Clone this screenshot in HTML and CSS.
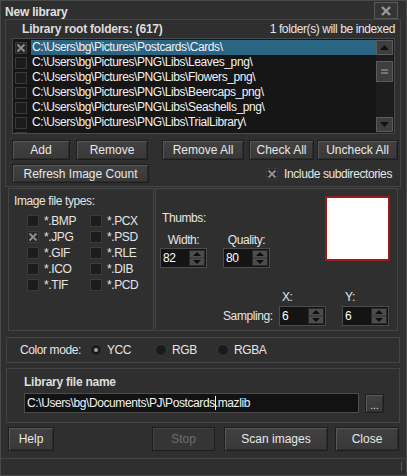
FILE: index.html
```html
<!DOCTYPE html>
<html lang="en">
<head>
    <meta charset="UTF-8">
    <title>New library</title>
    <link rel="stylesheet" href="styles.css">
</head>
<body>
<div class="window">
    <div class="titlebar">
        <span class="title">New library</span>
        <button class="close" type="button">
            <svg width="12" height="10" viewBox="0 0 12 10"><path d="M2 1L10 9M10 1L2 9" stroke="#9a9a9a" stroke-width="2.4"/></svg>
        </button>
    </div>

    <div class="roots">
        <div class="roots-head">
            <b>Library root folders: (617)</b>
            <span>1 folder(s) will be indexed</span>
        </div>
        <div class="folder-list">
            <div class="rows">
                <div class="row selected"><span class="check on"><svg viewBox="0 0 10 10"><path d="M1.5 1.5L8.5 8.5M8.5 1.5L1.5 8.5" stroke="#8c8c8c" stroke-width="2"/></svg></span><span class="path">C:\Users\bg\Pictures\Postcards\Cards\</span></div>
                <div class="row"><span class="check"></span><span class="path">C:\Users\bg\Pictures\PNG\Libs\Leaves_png\</span></div>
                <div class="row"><span class="check"></span><span class="path">C:\Users\bg\Pictures\PNG\Libs\Flowers_png\</span></div>
                <div class="row"><span class="check"></span><span class="path">C:\Users\bg\Pictures\PNG\Libs\Beercaps_png\</span></div>
                <div class="row"><span class="check"></span><span class="path">C:\Users\bg\Pictures\PNG\Libs\Seashells_png\</span></div>
                <div class="row"><span class="check"></span><span class="path">C:\Users\bg\Pictures\PNG\Libs\TrialLibrary\</span></div>
                <div class="row"><span class="check"></span><span class="path"></span></div>
            </div>
            <div class="scrollbar">
                <span class="sb-btn"><svg width="9" height="5" viewBox="0 0 9 5"><path d="M0 5L4.5 0L9 5Z" fill="#111"/></svg></span>
                <span class="sb-thumb"><svg width="7" height="5" viewBox="0 0 7 5"><path d="M0 1H7M0 4H7" stroke="#aaa" stroke-width="1"/></svg></span>
                <span class="sb-btn down"><svg width="9" height="5" viewBox="0 0 9 5"><path d="M0 0L4.5 5L9 0Z" fill="#111"/></svg></span>
            </div>
        </div>
        <div class="btn-row main">
            <button class="btn add" type="button">Add</button>
            <button class="btn remove" type="button">Remove</button>
            <button class="btn remove-all" type="button">Remove All</button>
            <button class="btn check-all" type="button">Check All</button>
            <button class="btn uncheck-all" type="button">Uncheck All</button>
        </div>
        <div class="btn-row extra">
            <button class="btn refresh" type="button">Refresh Image Count</button>
            <label class="include"><span class="check on"><svg viewBox="0 0 10 10"><path d="M1.5 1.5L8.5 8.5M8.5 1.5L1.5 8.5" stroke="#8c8c8c" stroke-width="2"/></svg></span>Include subdirectories</label>
        </div>
    </div>

    <div class="middle">
        <div class="filetypes">
            <div class="group-title">Image file types:</div>
            <div class="type-grid">
                <label class="type"><span class="check"></span>*.BMP</label>
                <label class="type"><span class="check on"><svg viewBox="0 0 10 10"><path d="M1.5 1.5L8.5 8.5M8.5 1.5L1.5 8.5" stroke="#8c8c8c" stroke-width="2"/></svg></span>*.JPG</label>
                <label class="type"><span class="check"></span>*.GIF</label>
                <label class="type"><span class="check"></span>*.ICO</label>
                <label class="type"><span class="check"></span>*.TIF</label>
                <label class="type"><span class="check"></span>*.PCX</label>
                <label class="type"><span class="check"></span>*.PSD</label>
                <label class="type"><span class="check"></span>*.RLE</label>
                <label class="type"><span class="check"></span>*.DIB</label>
                <label class="type"><span class="check"></span>*.PCD</label>
            </div>
        </div>

        <div class="thumbs">
            <div class="thumbs-top">
                <div class="thumbs-left">
                    <div class="thumbs-label">Thumbs:</div>
                    <div class="spins">
                        <div class="spin-group">
                            <span class="spin-caption">Width:</span>
                            <div class="spin"><span class="spin-value">82</span><span class="spin-arrows"><svg width="14" height="16" viewBox="0 0 14 16"><path d="M3 6L7 2L11 6Z M3 10L7 14L11 10Z" fill="#0d0d0d"/><path d="M0 8H14" stroke="#333" stroke-width="1"/></svg></span></div>
                        </div>
                        <div class="spin-group">
                            <span class="spin-caption">Quality:</span>
                            <div class="spin"><span class="spin-value">80</span><span class="spin-arrows"><svg width="14" height="16" viewBox="0 0 14 16"><path d="M3 6L7 2L11 6Z M3 10L7 14L11 10Z" fill="#0d0d0d"/><path d="M0 8H14" stroke="#333" stroke-width="1"/></svg></span></div>
                        </div>
                    </div>
                </div>
                <div class="preview"></div>
            </div>
            <div class="sampling">
                <span class="sampling-label">Sampling:</span>
                <div class="sample-group">
                    <span class="sample-caption">X:</span>
                    <div class="spin"><span class="spin-value">6</span><span class="spin-arrows"><svg width="14" height="16" viewBox="0 0 14 16"><path d="M3 6L7 2L11 6Z M3 10L7 14L11 10Z" fill="#0d0d0d"/><path d="M0 8H14" stroke="#333" stroke-width="1"/></svg></span></div>
                </div>
                <div class="sample-group">
                    <span class="sample-caption">Y:</span>
                    <div class="spin"><span class="spin-value">6</span><span class="spin-arrows"><svg width="14" height="16" viewBox="0 0 14 16"><path d="M3 6L7 2L11 6Z M3 10L7 14L11 10Z" fill="#0d0d0d"/><path d="M0 8H14" stroke="#333" stroke-width="1"/></svg></span></div>
                </div>
            </div>
        </div>
    </div>

    <div class="colormode">
        <span class="mode-label">Color mode:</span>
        <label class="radio-opt"><span class="radio on"></span>YCC</label>
        <label class="radio-opt rgb"><span class="radio"></span>RGB</label>
        <label class="radio-opt"><span class="radio"></span>RGBA</label>
    </div>

    <div class="libfile">
        <div class="libfile-title">Library file name</div>
        <div class="libfile-row">
            <div class="path-input">C:\Users\bg\Documents\PJ\Postcards<span class="caret"></span>.mazlib</div>
            <button class="btn browse" type="button">...</button>
        </div>
    </div>

    <div class="actions">
        <button class="btn help" type="button">Help</button>
        <button class="btn stop" type="button" disabled>Stop</button>
        <button class="btn scan" type="button">Scan images</button>
        <button class="btn close-btn" type="button">Close</button>
    </div>

    <div class="statusbar"><span class="grip"></span></div>
</div>
</body>
</html>
```

FILE: styles.css
```css
* {
    box-sizing: border-box;
}
body {
    margin: 0;
    background: #2f2f2f;
    font-family: "Liberation Sans", Arial, sans-serif;
    font-size: 12px;
    letter-spacing: -0.4px;
    color: #e6e6e6;
}
.window {
    width: 407px;
    height: 476px;
    border: 1px solid #4a4a4a;
    background: #2f2f2f;
    display: flex;
    flex-direction: column;
    overflow: hidden;
}

/* title bar */
.titlebar {
    height: 18px;
    display: flex;
    align-items: center;
    padding: 0 8px 0 4px;
}
.title {
    font-weight: bold;
    letter-spacing: -0.2px;
    margin-top: 3px;
    color: #e2e2e2;
}
.close {
    margin-left: auto;
    margin-top: 1px;
    width: 24px;
    height: 17px;
    padding: 0;
    border: 1px solid #585858;
    background: #353535;
    display: flex;
    align-items: center;
    justify-content: center;
}

/* library root folders */
.roots {
    margin: 0 5px 0 4px;
    height: 168px;
    border: 1px solid #444;
}
.roots-head {
    height: 18px;
    display: flex;
    align-items: center;
    justify-content: space-between;
    padding: 0 5px 0 16px;
}
.roots-head b {
    letter-spacing: -0.2px;
    color: #dedede;
}
.folder-list {
    margin: 0 5px 0 6px;
    height: 96px;
    border: 1px solid #4a4a4a;
    background: #161616;
    display: flex;
}
.rows {
    flex: 1;
    padding-top: 1px;
    overflow: hidden;
}
.row {
    height: 15px;
    display: flex;
    align-items: center;
    padding-left: 2px;
}
.row .check {
    margin-right: 4px;
}
.path {
    flex: 1;
    height: 15px;
    line-height: 15px;
    padding-left: 1px;
    white-space: nowrap;
    color: #f2f2f2;
}
.row.selected .path {
    background: #2a6584;
}
.scrollbar {
    width: 17px;
    margin-right: 1px;
    padding: 1px 0;
    display: flex;
    flex-direction: column;
    background: #1d1d1d;
}
.sb-btn, .sb-thumb {
    border: 1px solid #5c5c5c;
    background: #3e3e3e;
    display: flex;
    align-items: center;
    justify-content: center;
}
.sb-btn {
    height: 15px;
}
.sb-thumb {
    margin-top: 6px;
    height: 21px;
}
.sb-btn.down {
    margin-top: auto;
}

/* checkboxes */
.check {
    width: 12px;
    height: 12px;
    flex: none;
    border: 1px solid #3a3a3a;
    background: #1c1c1c;
    display: inline-flex;
}
.check svg {
    width: 10px;
    height: 10px;
}
.check.on {
    background: #262626;
}

/* buttons */
.btn {
    height: 100%;
    padding: 0;
    font: inherit;
    color: #e8e8e8;
    border: 1px solid #1e1e1e;
    background: linear-gradient(#414141, #383838);
    box-shadow: inset 1px 1px 0 #585858, inset -1px -1px 0 #2c2c2c;
}
.btn:disabled {
    color: #6e6e6e;
    box-shadow: inset 1px 1px 0 #434343;
    background: #353535;
}
.btn-row {
    display: flex;
    align-items: center;
    padding-left: 6px;
}
.btn-row.main {
    margin-top: 6px;
    height: 20px;
}
.btn-row.extra {
    margin-top: 4px;
    height: 19px;
}
.add { width: 58px; }
.remove { width: 72px; margin-left: 6px; }
.remove-all { width: 82px; margin-left: 14px; }
.check-all { width: 65px; margin-left: 5px; }
.uncheck-all { width: 81px; margin-left: 3px; }
.refresh { width: 137px; }
.include {
    margin-left: auto;
    padding-right: 8px;
    display: flex;
    align-items: center;
    gap: 6px;
}

/* file types + thumbs */
.middle {
    display: flex;
    margin: 1px 0 0 7px;
    height: 143px;
}
.filetypes {
    width: 146px;
    border: 1px solid #444;
    padding: 5px 0 0 5px;
}
.group-title {
    line-height: 14px;
}
.type-grid {
    margin: 5px 0 0 13px;
    display: grid;
    grid-template-columns: 63px auto;
    grid-template-rows: repeat(5, 16px);
    grid-auto-flow: column;
}
.type {
    display: flex;
    align-items: center;
    gap: 5px;
}
.thumbs {
    width: 243px;
    margin-left: 1px;
    border: 1px solid #444;
}
.thumbs-top {
    display: flex;
    align-items: flex-start;
    padding-top: 7px;
}
.thumbs-left {
    padding-left: 4px;
}
.thumbs-label {
    margin: 15px 0 0 2px;
    line-height: 14px;
}
.spins {
    display: flex;
    gap: 16px;
    margin-top: 8px;
}
.spin-group {
    width: 47px;
    display: flex;
    flex-direction: column;
    align-items: center;
}
.spin-caption {
    line-height: 14px;
    margin-bottom: 1px;
}
.preview {
    width: 65px;
    height: 65px;
    margin-left: auto;
    margin-right: 7px;
    border: 2px solid #9a1b1b;
    background: #fff;
}
.sampling {
    display: flex;
    align-items: flex-end;
    padding-left: 67px;
    margin-top: 22px;
}
.sampling-label {
    width: 56px;
    line-height: 20px;
}
.sample-group {
    width: 47px;
    display: flex;
    flex-direction: column;
}
.sample-group + .sample-group {
    margin-left: 16px;
}
.sample-caption {
    line-height: 14px;
    margin: 0 0 2px 3px;
}
.spin {
    width: 47px;
    height: 20px;
    border: 1px solid #4c4c4c;
    background: #141414;
    display: flex;
}
.spin-value {
    flex: 1;
    padding-left: 2px;
    line-height: 18px;
    color: #fff;
}
.spin-arrows {
    width: 16px;
    margin: 1px;
    border: 1px solid #2a2a2a;
    background: #4d4d4d;
    display: flex;
    align-items: center;
    justify-content: center;
}

/* color mode */
.colormode {
    margin: 6px 6px 0 5px;
    height: 26px;
    border: 1px solid #444;
    display: flex;
    align-items: center;
    padding-left: 13px;
}
.mode-label {
    width: 70px;
}
.radio-opt {
    width: 65px;
    display: flex;
    align-items: center;
    gap: 5px;
}
.radio-opt.rgb {
    width: 62px;
}
.radio {
    width: 12px;
    height: 12px;
    border-radius: 50%;
    border: 1px solid #383838;
    background: #1a1a1a;
    display: flex;
    align-items: center;
    justify-content: center;
}
.radio.on::after {
    content: "";
    width: 4px;
    height: 4px;
    border-radius: 50%;
    background: #9c9c9c;
}

/* library file */
.libfile {
    margin: 5px 6px 0 5px;
    height: 55px;
    border: 1px solid #444;
    padding: 6px 0 0 17px;
}
.libfile-title {
    font-weight: bold;
    letter-spacing: -0.25px;
    line-height: 14px;
    color: #dedede;
}
.libfile-row {
    display: flex;
    margin-top: 4px;
}
.path-input {
    width: 335px;
    height: 20px;
    border: 1px solid #4c4c4c;
    background: #121212;
    padding-left: 2px;
    line-height: 18px;
    white-space: nowrap;
    overflow: hidden;
    color: #f2f2f2;
}
.caret {
    display: inline-block;
    width: 1px;
    height: 14px;
    margin-right: -1px;
    vertical-align: -3px;
    background: #fff;
}
.browse {
    width: 19px;
    height: 19px;
    margin: 1px 0 0 6px;
    font-size: 10px;
    line-height: 22px;
}

/* bottom actions */
.actions {
    display: flex;
    margin: 4px 7px 0 7px;
    height: 24px;
}
.help { width: 46px; }
.stop { width: 63px; margin-left: auto; }
.scan { width: 104px; margin-left: 9px; }
.close-btn { width: 64px; margin-left: 7px; }

.statusbar {
    margin-top: 7px;
    flex: 1;
    border-top: 1px solid #444;
    display: flex;
    justify-content: flex-end;
}
.grip {
    width: 1px;
    height: 9px;
    margin: 3px 4px 0 0;
    background: #555;
}
```
